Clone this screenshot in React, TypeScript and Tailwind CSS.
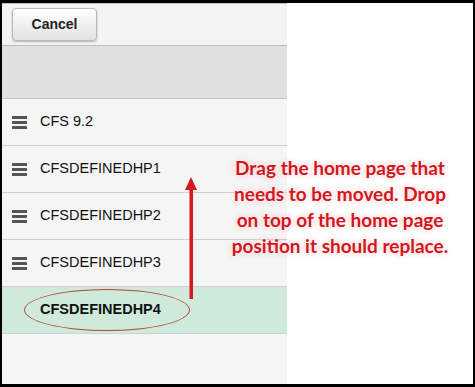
import React from 'react';

const ROWS = ['CFS 9.2', 'CFSDEFINEDHP1', 'CFSDEFINEDHP2', 'CFSDEFINEDHP3'];

function Grip() {
  return (
    <div className="flex w-[15px] flex-col gap-[2px]">
      <span className="h-[3px] bg-[#555]" />
      <span className="h-[3px] bg-[#555]" />
      <span className="h-[3px] bg-[#555]" />
    </div>
  );
}

export default function App() {
  return (
    <div className="h-[387px] w-[475px] bg-black pt-[3px] pb-[3px] pl-[2px] pr-[2px]">
      <div className="relative flex h-full bg-white font-['Liberation_Sans',Arial,sans-serif]">
        {/* home page list */}
        <div className="flex w-[285px] flex-col bg-[#f5f5f5]">
          <div className="h-[43px] border-t border-b border-[#bdbdbd] bg-[#f4f4f4] pl-[10px] pt-[4px]">
            <button className="h-[33px] w-[85px] rounded-[4px] border border-[#b8b8b8] bg-gradient-to-b from-white to-[#e2e2e2] text-[14px] font-bold text-[#222] shadow-[0_1px_2px_rgba(0,0,0,0.25)]">
              Cancel
            </button>
          </div>
          <div className="h-[53px] border-b border-[#c4c4c4] bg-[#e1e1e1]" />
          {ROWS.map((label) => (
            <div key={label} className="flex h-[47px] items-center gap-[13px] border-b border-[#cfcfcf] pl-[10px]">
              <Grip />
              <span className="text-[14.5px] text-[#111]">{label}</span>
            </div>
          ))}
          <div className="relative flex h-[47px] items-center border-b border-[#c9d9cf] bg-[#cfe9da] pl-[38px]">
            <span className="text-[14.5px] font-bold text-[#111]">CFSDEFINEDHP4</span>
            <span className="absolute left-[22px] top-[2px] h-[42px] w-[166px] rounded-[50%] border border-[#b5443f]" />
          </div>
        </div>

        {/* annotation */}
        <svg className="absolute left-[182px] top-[174px]" width="14" height="122" viewBox="0 0 14 122">
          <polygon points="7,0 1,13 13,13" fill="#d21a1f" />
          <rect x="5.5" y="12" width="3.5" height="110" fill="#d21a1f" />
        </svg>
        <p className="absolute left-[216px] top-[152px] w-[244px] text-center font-['Lato','Open_Sans',sans-serif] text-[19px] leading-[26px] font-bold text-[#d4161c] [text-shadow:0_0_3px_#fff,0_0_6px_#f3b3b3]">
          Drag the home page that
          <br />
          needs to be moved. Drop
          <br />
          on top of the home page
          <br />
          position it should replace.
        </p>
      </div>
    </div>
  );
}
